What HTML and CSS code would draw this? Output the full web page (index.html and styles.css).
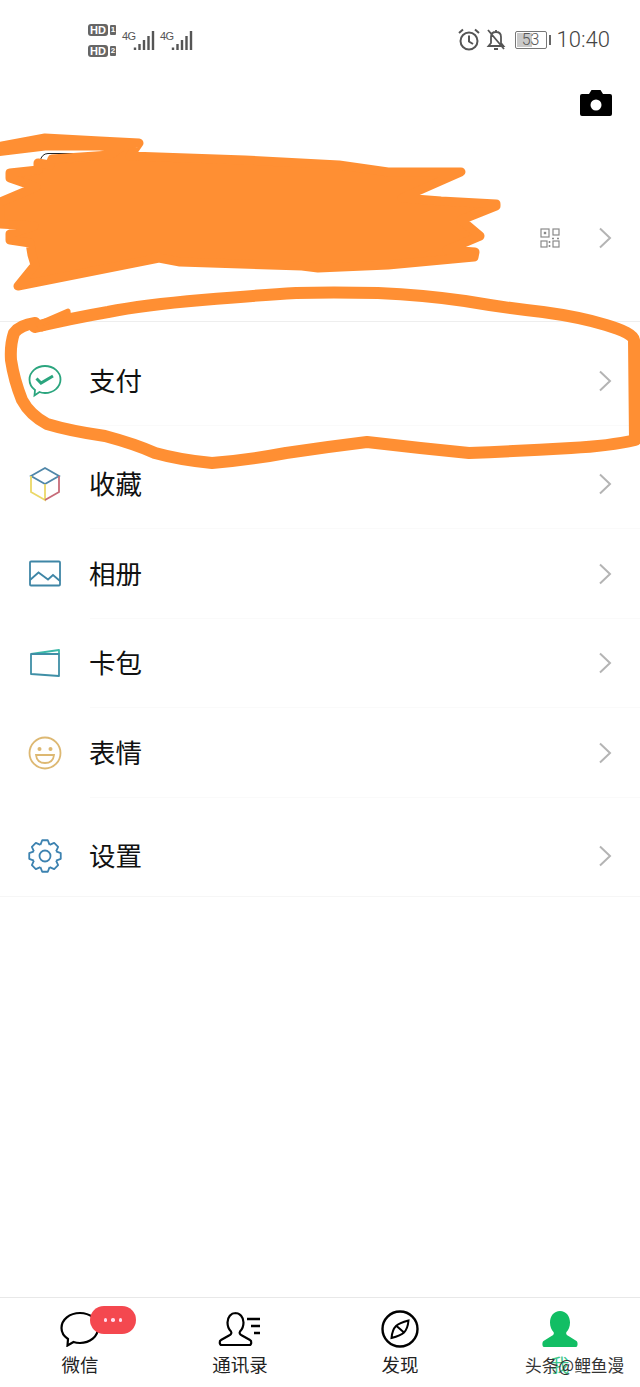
FILE: index.html
```html
<!DOCTYPE html>
<html lang="zh-CN">
<head>
    <meta charset="UTF-8">
    <meta name="viewport" content="width=device-width, initial-scale=1.0">
    <title>我</title>
    <link rel="stylesheet" href="styles.css">
</head>
<body>
    <div class="status">
        <div class="sims">
            <div class="sim"><span class="hd">HD</span><span class="simNum">1</span></div>
            <div class="sim"><span class="hd">HD</span><span class="simNum">2</span></div>
        </div>
        <div class="net">
            <span class="netLabel">4G</span>
            <svg width="22" height="19" viewBox="0 0 22 19"><path d="M2 19v-2.500M6.500 19v-6M11 19v-10M15.500 19v-14M20 19v-19" stroke="#555" stroke-width="2.400"/></svg>
        </div>
        <div class="net">
            <span class="netLabel">4G</span>
            <svg width="22" height="19" viewBox="0 0 22 19"><path d="M2 19v-2.500M6.500 19v-6M11 19v-10M15.500 19v-14M20 19v-19" stroke="#555" stroke-width="2.400"/></svg>
        </div>
        <div class="statusRight">
            <svg width="22" height="24" viewBox="0 0 22 24" fill="none" stroke="#555" stroke-width="2"><circle cx="11" cy="13" r="8.500"/><path d="M11 7.500v6l4 2.500M1 5l4-3.500M21 5l-4-3.500"/></svg>
            <svg class="bell" width="20" height="24" viewBox="0 0 20 24" fill="none" stroke="#555" stroke-width="1.800"><path d="M10 2v2M5 9c0-3 2-5 5-5s5 2 5 5v6l2.500 3h-15l2.500-3zM8 21h4M2 2l16 19"/></svg>
            <div class="battery"><div class="batteryFill"></div><span class="batteryNum">53</span></div>
            <div class="batteryNub"></div>
            <span class="clock">10:40</span>
        </div>
    </div>

    <div class="topbar">
        <svg width="32" height="26" viewBox="0 0 32 26"><path d="M2 4h7l2.500-4h9l2.500 4h7a2 2 0 0 1 2 2v18a2 2 0 0 1-2 2h-28a2 2 0 0 1-2-2v-18a2 2 0 0 1 2-2z" fill="#000"/><circle cx="16" cy="15" r="5.500" fill="#fff"/></svg>
    </div>

    <div class="profile">
        <div class="avatar"></div>
        <div class="profileRight">
            <svg width="20" height="20" viewBox="0 0 20 20" fill="none" stroke="#8a8a8a" stroke-width="1.200"><rect x="1" y="1" width="8" height="8"/><rect x="3.800" y="3.800" width="2.400" height="2.400" fill="#8a8a8a" stroke="none"/><rect x="13" y="1" width="6" height="6"/><rect x="1" y="13" width="6" height="6"/><rect x="13" y="13" width="6" height="6"/><path d="M12 10.500h2M17 10.500h2M9.500 13v2M9.500 17v2" stroke-width="1.600"/></svg>
            <svg class="chevron" width="14" height="22" viewBox="0 0 14 22" fill="none" stroke="#b4b4b4" stroke-width="2"><path d="M2 1.500l10 9.500-10 9.500"/></svg>
        </div>
    </div>

    <div class="group">
        <div class="row">
            <svg class="rowIcon" width="36" height="36" viewBox="0 0 36 36" fill="none" stroke="#2ba57e" stroke-width="1.800"><path d="M18 3c8.500 0 15.500 6 15.500 13.500s-7 13.500-15.500 13.500c-2 0-4-.3-5.500-1l-5 3.500.5-5.500c-3.500-2.500-5.500-6.300-5.500-10.500 0-7.500 7-13.500 15.500-13.500z"/><path d="M9.500 15.500l4.500 4.500 12-7" stroke-width="3"/></svg>
            <span class="rowText">支付</span>
            <svg class="chevron" width="14" height="22" viewBox="0 0 14 22" fill="none" stroke="#b4b4b4" stroke-width="2"><path d="M2 1.500l10 9.500-10 9.500"/></svg>
        </div>
    </div>

    <div class="group">
        <div class="row">
            <svg class="rowIcon" width="36" height="36" viewBox="0 0 36 36" fill="none" stroke-width="1.800"><path d="M18 2l14 8-14 8-14-8z" stroke="#4f86a8"/><path d="M4 10v16l14 8v-16" stroke="#ebd867"/><path d="M32 10v16l-14 8" stroke="#c76b78"/></svg>
            <span class="rowText">收藏</span>
            <svg class="chevron" width="14" height="22" viewBox="0 0 14 22" fill="none" stroke="#b4b4b4" stroke-width="2"><path d="M2 1.500l10 9.500-10 9.500"/></svg>
        </div>
        <div class="row">
            <svg class="rowIcon" width="36" height="36" viewBox="0 0 36 36" fill="none" stroke="#3f86a6" stroke-width="1.800"><rect x="3" y="5.500" width="30" height="24" rx="1"/><path d="M3 24l8.500-7.500 9.500 7 5-4.500 7 6"/></svg>
            <span class="rowText">相册</span>
            <svg class="chevron" width="14" height="22" viewBox="0 0 14 22" fill="none" stroke="#b4b4b4" stroke-width="2"><path d="M2 1.500l10 9.500-10 9.500"/></svg>
        </div>
        <div class="row">
            <svg class="rowIcon" width="36" height="36" viewBox="0 0 36 36" fill="none" stroke-width="1.800" stroke-linejoin="round"><path d="M4 9l28-4v4" stroke="#3bb8a8"/><path d="M4 9h28v22l-28-2z" stroke="#3f8fa6"/></svg>
            <span class="rowText">卡包</span>
            <svg class="chevron" width="14" height="22" viewBox="0 0 14 22" fill="none" stroke="#b4b4b4" stroke-width="2"><path d="M2 1.500l10 9.500-10 9.500"/></svg>
        </div>
        <div class="row">
            <svg class="rowIcon" width="36" height="36" viewBox="0 0 36 36" fill="none" stroke="#ddb872" stroke-width="1.800"><circle cx="18" cy="18" r="15.500"/><circle cx="12.500" cy="14" r="2" fill="#ddb872" stroke="none"/><circle cx="23.500" cy="14" r="2" fill="#ddb872" stroke="none"/><path d="M9 20h18c-.5 5-4 8-9 8s-8.500-3-9-8z"/></svg>
            <span class="rowText">表情</span>
            <svg class="chevron" width="14" height="22" viewBox="0 0 14 22" fill="none" stroke="#b4b4b4" stroke-width="2"><path d="M2 1.500l10 9.500-10 9.500"/></svg>
        </div>
    </div>

    <div class="group">
        <div class="row settingsRow">
            <svg class="rowIcon" width="36" height="36" viewBox="0 0 36 36" fill="none" stroke="#3c82b0" stroke-width="1.800" stroke-linejoin="round">
                <path id="tooth" d="M13.410 6.910l1.790-4.670h5.600l1.790 4.670"/>
                <use href="#tooth" transform="rotate(45 18 18)"/>
                <use href="#tooth" transform="rotate(90 18 18)"/>
                <use href="#tooth" transform="rotate(135 18 18)"/>
                <use href="#tooth" transform="rotate(180 18 18)"/>
                <use href="#tooth" transform="rotate(225 18 18)"/>
                <use href="#tooth" transform="rotate(270 18 18)"/>
                <use href="#tooth" transform="rotate(315 18 18)"/>
                <circle cx="18" cy="18" r="5.500"/>
            </svg>
            <span class="rowText">设置</span>
            <svg class="chevron" width="14" height="22" viewBox="0 0 14 22" fill="none" stroke="#b4b4b4" stroke-width="2"><path d="M2 1.500l10 9.500-10 9.500"/></svg>
        </div>
    </div>

    <div class="tabbar">
        <div class="tab">
            <div class="tabIcon">
                <svg width="40" height="36" viewBox="0 0 40 36" fill="none" stroke="#000" stroke-width="2.200"><path d="M20 2c10 0 18 6.500 18 15s-8 15-18 15c-2.500 0-4.500-.3-6.500-1l-6 3.500 .5-6.500c-4-2.700-6.500-6.500-6.500-11 0-8.500 8-15 18.500-15z"/></svg>
                <div class="badge"><i></i><i></i><i></i></div>
            </div>
            <span>微信</span>
        </div>
        <div class="tab">
            <div class="tabIcon">
                <svg width="44" height="36" viewBox="0 0 44 36" fill="none" stroke="#000" stroke-width="2.200"><path d="M17 2c5 0 8.500 4 8.500 9.500 0 4-1.500 7-3.500 9-1 1.500 0 3 2 4l8 4.500c2 1 1.500 5-.5 5h-28c-2 0-2.500-4-.5-5l8-4.500c2-1 3-2.500 2-4-2-2-3.500-5-3.500-9 0-5.500 3.500-9.500 8-9.500z"/><path d="M29 8h13M33 15h9M36 22h6" stroke-width="2.400"/></svg>
            </div>
            <span>通讯录</span>
        </div>
        <div class="tab">
            <div class="tabIcon">
                <svg width="38" height="38" viewBox="0 0 38 38" fill="none" stroke="#000" stroke-width="2.400"><circle cx="19" cy="19" r="17.500"/><path d="M27.500 10.500c-6 1.500-10.500 3.500-12.500 5.500s-4 6.500-4.500 12c6-1.500 10.500-3.500 12.500-5.500s4-6.500 4.500-12zM15 15.500l8 7" stroke-width="2"/></svg>
            </div>
            <span>发现</span>
        </div>
        <div class="tab">
            <div class="tabIcon">
                <svg width="36" height="36" viewBox="0 0 36 36"><path d="M18 0c6 0 10 5 10 11.500 0 4-1.500 7.500-3.500 9.500-1 1.500 0 3 2 4l8 5c1.500 1 1.500 6-.5 6h-32c-2 0-2-5-.5-6l8-5c2-1 3-2.500 2-4-2-2-3.500-5.500-3.500-9.500 0-6.500 4-11.500 10-11.500z" fill="#12be64"/></svg>
            </div>
            <span class="active">我</span>
        </div>
    </div>

    <svg class="scribble" width="640" height="1387" viewBox="0 0 640 1387">
        <!-- 头像昵称上的涂抹 -->
        <path fill="#ff8f33" stroke="#ff8f33" stroke-width="9" stroke-linejoin="round" d="M-4 147L45 138 100 141 139 143 130 156 245 160 339 165 388 172 461 172 402 198 441 201 496 204 496 206 461 220 480 236 447 250 475 252 474 257 388 265 318 268 302 266 180 262 159 258 18 286 35 265 32 255 30 243 10 240 10 234 34 226 0 224 0 202 36 187 10 178 10 173 38 170 38 163 50 165 52 159 110 155 120 148 100 146 45 146 -4 152z"/>
        <!-- 圈住支付一行 -->
        <path fill="none" stroke="#ff8f33" stroke-width="12" stroke-linejoin="round" stroke-linecap="round" d="M35 327Q73 318 108 312Q143 305 202 300Q261 295 296 293Q331 292 378 293Q424 295 465 301Q506 308 543 312Q580 317 606 325Q633 333 634 340L635 440Q610 446 571 448Q520 451 469 453Q418 448 367 442Q326 447 286 453Q249 460 212 463Q180 460 155 453Q135 444 105 436Q70 431 47 424Q30 415 22 400Q14 380 11 360Q10 345 14 333Q20 325 35 323"/>
        <path fill="#ff8f33" stroke="#ff8f33" stroke-width="5" stroke-linejoin="round" d="M38 324L68 311 69 319 42 329z"/>
    </svg>

    <div class="watermark">头条@鲤鱼漫</div>
</body>
</html>
```

FILE: styles.css
```css
body {
    margin: 0;
    width: 640px;
    height: 1387px;
    position: relative;
    overflow: hidden;
    display: flex;
    flex-direction: column;
    background-color: #fff;
    font-family: "Noto Sans CJK SC", "Liberation Sans", sans-serif;
    color: #111;
}

svg {
    display: block;
    flex-shrink: 0;
}

/* status bar */
.status {
    height: 80px;
    padding: 0 30px 0 88px;
    display: flex;
    align-items: center;
    gap: 6px;
}

.sims {
    display: flex;
    flex-direction: column;
    gap: 9px;
}

.sim {
    display: flex;
    align-items: center;
    gap: 2px;
}

.hd {
    width: 20px;
    height: 12px;
    border-radius: 3px;
    background-color: #666;
    color: #fff;
    font: bold 11px/12px "Liberation Sans", sans-serif;
    text-align: center;
}

.simNum {
    width: 6px;
    height: 10px;
    border-radius: 1px;
    background-color: #666;
    color: #fff;
    font: bold 8px/10px "Liberation Sans", sans-serif;
    text-align: center;
}

.net {
    display: flex;
    align-items: flex-start;
    margin-right: -1px;
}

.netLabel {
    width: 11px;
    color: #555;
    font: 11px/11px "Liberation Sans", sans-serif;
    letter-spacing: -0.5px;
}

.statusRight {
    margin-left: auto;
    display: flex;
    align-items: center;
}

.bell {
    margin-left: 6px;
}

.battery {
    margin-left: 9px;
    width: 30px;
    height: 16px;
    border: 1px solid #777;
    border-radius: 2px;
    position: relative;
    text-align: center;
    font: 300 16px/16px Roboto, sans-serif;
    color: #555;
}

.batteryFill {
    position: absolute;
    left: 1px;
    top: 1px;
    bottom: 1px;
    width: 15px;
    background-color: #c9c9c9;
}

.batteryNum {
    position: relative;
}

.batteryNub {
    width: 2px;
    height: 10px;
    margin-left: 2px;
    background-color: #666;
}

.clock {
    margin-left: 6px;
    font: 300 22px/26px Roboto, sans-serif;
    color: #444;
}

/* header */
.topbar {
    margin-top: 10px;
    height: 26px;
    padding-right: 28px;
    display: flex;
    justify-content: flex-end;
}

.profile {
    height: 206px;
    padding: 37px 28px 0 40px;
    box-sizing: border-box;
    display: flex;
    align-items: flex-start;
    border-bottom: 1px solid #eee;
}

.avatar {
    width: 98px;
    height: 98px;
    border: 1px solid #222;
    border-radius: 8px;
}

.profileRight {
    margin-left: auto;
    margin-top: 74px;
    display: flex;
    align-items: center;
    gap: 38px;
}

/* menu */
.group {
    margin-top: 14px;
}

.row {
    height: 89.5px;
    padding: 0 28px 0 27px;
    display: flex;
    align-items: center;
    box-sizing: border-box;
    position: relative;
}

.row::after {
    content: "";
    position: absolute;
    left: 90px;
    right: 0;
    bottom: 0;
    height: 1px;
    background-color: #fafafa;
}

.settingsRow::after {
    left: 0;
    background-color: #f6f6f6;
    bottom: 4px;
}

.rowIcon {
    margin-right: 26px;
}

.rowText {
    font-size: 26.500px;
    line-height: 36px;
    padding-bottom: 2px;
    flex: 1;
}

/* tab bar */
.tabbar {
    margin-top: auto;
    height: 89px;
    border-top: 1px solid #e8e8e8;
    display: flex;
}

.tab {
    width: 160px;
    padding-top: 12px;
    display: flex;
    flex-direction: column;
    align-items: center;
    font-size: 18.500px;
    line-height: 26px;
    color: #222;
}

.tabIcon {
    height: 38px;
    margin-bottom: 3px;
    position: relative;
    display: flex;
    align-items: center;
}

.badge {
    position: absolute;
    left: 30px;
    top: -4px;
    width: 46px;
    height: 28px;
    border-radius: 14px;
    background-color: #f4484f;
    display: flex;
    align-items: center;
    justify-content: center;
    gap: 4px;
}

.badge i {
    width: 3.500px;
    height: 3.500px;
    border-radius: 50%;
    background-color: #fde;
}

.active {
    color: #3cc58a;
}

/* drawn over the screenshot afterwards */
.scribble {
    position: absolute;
    left: 0;
    top: 0;
    pointer-events: none;
}

.watermark {
    position: absolute;
    left: 525px;
    top: 1352px;
    font-size: 16.700px;
    line-height: 26px;
    color: #333;
    white-space: nowrap;
}
```
